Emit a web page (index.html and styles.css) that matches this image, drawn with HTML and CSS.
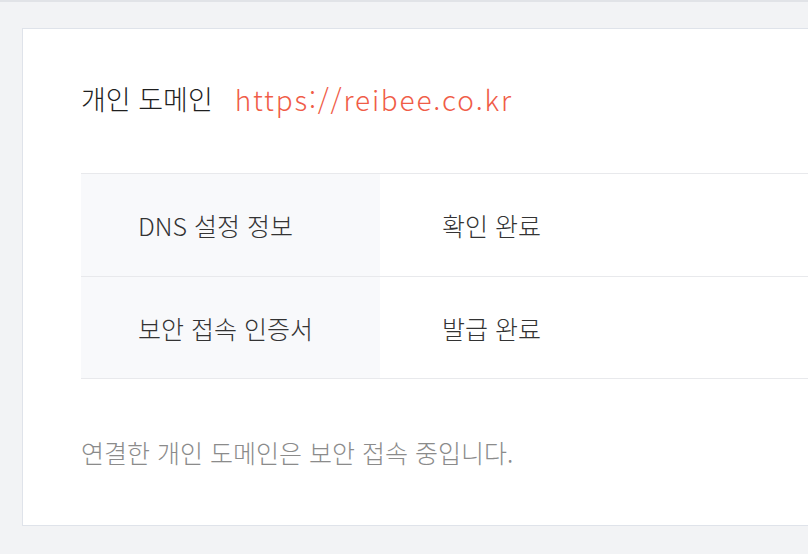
FILE: index.html
```html
<!DOCTYPE html>
<html lang="ko">
<head>
<meta charset="utf-8">
<link rel="stylesheet" href="styles.css">
</head>
<body>
<div class="page">
  <section class="card">
    <h2 class="domain">
      <span class="domain-label">개인 도메인</span>
      <span class="domain-url">https://reibee.co.kr</span>
    </h2>
    <div class="status-table">
      <div class="status-row">
        <div class="status-key">DNS 설정 정보</div>
        <div class="status-value">확인 완료</div>
      </div>
      <div class="status-row">
        <div class="status-key">보안 접속 인증서</div>
        <div class="status-value">발급 완료</div>
      </div>
    </div>
    <p class="note">연결한 개인 도메인은 보안 접속 중입니다.</p>
  </section>
</div>
</body>
</html>
```

FILE: styles.css
```css
html, body {
  margin: 0;
  padding: 0;
  height: 100%;
  overflow: hidden;
}
body {
  background: #f2f3f5;
  font-family: "Noto Sans CJK KR", "Noto Sans", sans-serif;
  font-weight: 300;
  border-top: 2px solid #e1e3e7;
  box-sizing: border-box;
}
.page {
  padding: 26px 0 0 22px;
}
.card {
  background: #ffffff;
  border: 1px solid #dfe3ea;
  width: 900px;
  height: 498px;
  padding: 51px 0 0 58px;
  box-sizing: border-box;
}
.domain {
  margin: 0;
  display: flex;
  align-items: center;
  gap: 22px;
  font-weight: 300;
  font-size: 27px;
  line-height: 38px;
  height: 38px;
}
.domain-label {
  color: #1f1f1f;
}
.domain-url {
  color: #f05c47;
  font-size: 28px;
  letter-spacing: 1.8px;
}
.status-table {
  margin-top: 55px;
  border-top: 1px solid #e8e9ec;
}
.status-row {
  display: flex;
  height: 102px;
  border-bottom: 1px solid #e8e9ec;
}
.status-row:last-child {
  height: 101px;
}
.status-key {
  width: 299px;
  flex: none;
  background: #f8f9fb;
  display: flex;
  align-items: center;
  padding-left: 57px;
  box-sizing: border-box;
  font-size: 25px;
  color: #333333;
}
.status-value {
  display: flex;
  align-items: center;
  padding-left: 62px;
  font-size: 25px;
  color: #333333;
}
.note {
  margin: 55px 0 0;
  font-size: 25px;
  line-height: 36px;
  color: #8b8b8b;
}
```
